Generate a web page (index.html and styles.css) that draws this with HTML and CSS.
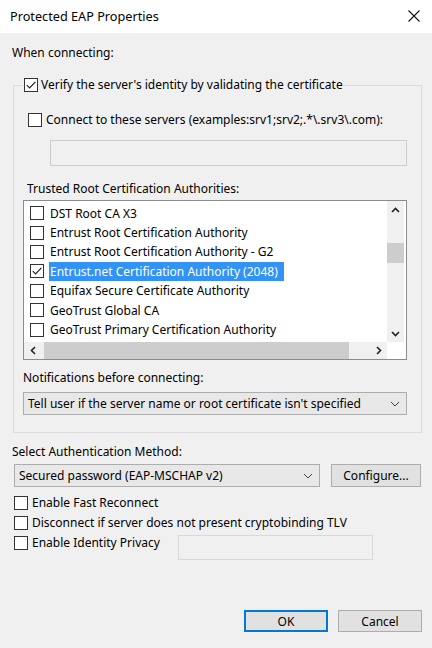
FILE: index.html
```html
<!DOCTYPE html>
<html>
<head>
<meta charset="utf-8">
<link rel="stylesheet" href="styles.css">
</head>
<body>
<div class="window">
  <div class="titlebar">
    <span class="title">Protected EAP Properties</span>
    <svg class="close" width="14" height="14" viewBox="0 0 14 14"><path d="M1.5 1.5L12.5 12.5M12.5 1.5L1.5 12.5" stroke="#111" stroke-width="1.1" fill="none"/></svg>
  </div>
  <div class="content">
    <div class="label when">When connecting:</div>
    <fieldset class="group">
      <legend class="legend">
        <span class="cb"><svg viewBox="0 0 12 12" width="12" height="12"><path d="M1.8 6.2L4.6 9L10.4 2.8" stroke="#222" stroke-width="1.2" fill="none"/></svg></span>
        <span class="cb-text tight">Verify the server's identity by validating the certificate</span>
      </legend>
      <div class="check-row connect"><span class="cb"></span><span class="cb-text">Connect to these servers (examples:srv1;srv2;.*\.srv3\.com):</span></div>
      <div class="textbox servers"></div>
      <div class="label trusted">Trusted Root Certification Authorities:</div>
      <div class="listbox">
        <div class="rows">
          <div class="item"><span class="cb"></span><span class="item-text">DST Root CA X3</span></div>
          <div class="item"><span class="cb"></span><span class="item-text">Entrust Root Certification Authority</span></div>
          <div class="item"><span class="cb"></span><span class="item-text">Entrust Root Certification Authority - G2</span></div>
          <div class="item"><span class="cb"><svg viewBox="0 0 12 12" width="12" height="12"><path d="M1.8 6.2L4.6 9L10.4 2.8" stroke="#222" stroke-width="1.2" fill="none"/></svg></span><span class="item-text selected">Entrust.net Certification Authority (2048)</span></div>
          <div class="item"><span class="cb"></span><span class="item-text">Equifax Secure Certificate Authority</span></div>
          <div class="item"><span class="cb"></span><span class="item-text">GeoTrust Global CA</span></div>
          <div class="item"><span class="cb"></span><span class="item-text">GeoTrust Primary Certification Authority</span></div>
        </div>
        <div class="vscroll">
          <div class="sb-btn"><svg width="9" height="6" viewBox="0 0 9 6"><path d="M1 5L4.5 1.5L8 5" stroke="#222" stroke-width="1.6" fill="none"/></svg></div>
          <div class="vtrack"><div class="vthumb"></div></div>
          <div class="sb-btn"><svg width="9" height="6" viewBox="0 0 9 6"><path d="M1 1L4.5 4.5L8 1" stroke="#222" stroke-width="1.6" fill="none"/></svg></div>
        </div>
        <div class="hscroll">
          <div class="sb-btn"><svg width="6" height="9" viewBox="0 0 6 9"><path d="M5 1L1.5 4.5L5 8" stroke="#222" stroke-width="1.6" fill="none"/></svg></div>
          <div class="htrack"><div class="hthumb"></div></div>
          <div class="sb-btn"><svg width="6" height="9" viewBox="0 0 6 9"><path d="M1 1L4.5 4.5L1 8" stroke="#222" stroke-width="1.6" fill="none"/></svg></div>
        </div>
        <div class="corner"></div>
      </div>
      <div class="label notif">Notifications before connecting:</div>
      <div class="combo notif-combo">
        <span class="combo-text">Tell user if the server name or root certificate isn't specified</span>
        <svg class="chev" width="10" height="6" viewBox="0 0 10 6"><path d="M1 1L5 5L9 1" stroke="#444" stroke-width="1" fill="none"/></svg>
      </div>
    </fieldset>
    <div class="label auth-label">Select Authentication Method:</div>
    <div class="auth-row">
      <div class="combo auth-combo">
        <span class="combo-text">Secured password (EAP-MSCHAP v2)</span>
        <svg class="chev" width="10" height="6" viewBox="0 0 10 6"><path d="M1 1L5 5L9 1" stroke="#444" stroke-width="1" fill="none"/></svg>
      </div>
      <div class="button configure">Configure...</div>
    </div>
    <div class="options">
      <div class="check-row opt"><span class="cb"></span><span class="cb-text">Enable Fast Reconnect</span></div>
      <div class="check-row opt"><span class="cb"></span><span class="cb-text">Disconnect if server does not present cryptobinding TLV</span></div>
      <div class="check-row opt privacy"><span class="cb"></span><span class="cb-text">Enable Identity Privacy</span><div class="textbox identity"></div></div>
    </div>
    <div class="buttons">
      <div class="button ok">OK</div>
      <div class="button cancel">Cancel</div>
    </div>
  </div>
</div>
</body>
</html>
```

FILE: styles.css
```css
* { box-sizing: border-box; }
html, body {
  margin: 0;
  padding: 0;
}
body {
  width: 432px;
  height: 648px;
  background: #f0f0f0;
  font-family: "Noto Sans", "Open Sans", sans-serif;
  font-size: 12px;
  color: #000;
  overflow: hidden;
}
.window {
  width: 432px;
  height: 648px;
  display: flex;
  flex-direction: column;
}
.titlebar {
  height: 33px;
  background: #fff;
  display: flex;
  align-items: center;
  justify-content: space-between;
  padding: 0 11px 2px 10px;
}
.title {
  font-size: 12.7px;
  color: #000;
}
.close {
  display: block;
}
.content {
  flex: 1;
  display: flex;
  flex-direction: column;
}
.label {
  line-height: 16px;
  height: 16px;
  white-space: nowrap;
}
.when {
  margin: 12px 0 0 12px;
}
.group {
  margin: 16px 10px 0 13px;
  border: 1px solid #dcdcdc;
  padding: 0 14px 17px 9px;
  min-width: 0;
}
.legend {
  padding: 0 1px;
  display: flex;
  align-items: center;
  height: 16px;
}
.cb {
  width: 14px;
  height: 14px;
  border: 1px solid #333;
  background: #fff;
  display: flex;
  align-items: center;
  justify-content: center;
  flex: none;
}
.cb svg { display: block; }
.cb-text {
  margin-left: 4px;
  white-space: nowrap;
  line-height: 16px;
}
.cb-text.tight { margin-left: 3px; }
.check-row {
  display: flex;
  align-items: center;
  height: 16px;
}
.connect {
  margin: 19px 0 0 5px;
}
.textbox {
  border: 1px solid #cccccc;
  background: #f0f0f0;
}
.servers {
  margin: 12px 0 0 27px;
  height: 26px;
}
.trusted {
  margin: 15px 0 0 4px;
}
.listbox {
  margin-top: 3px;
  height: 160px;
  border: 1px solid #8c8c8c;
  background: #fff;
  display: grid;
  grid-template-columns: minmax(0, 1fr) 17px;
  grid-template-rows: minmax(0, 1fr) 17px;
  padding-right: 2px;
}
.rows {
  overflow: hidden;
  padding-top: 2.5px;
}
.item {
  height: 19.4px;
  display: flex;
  align-items: stretch;
  padding-left: 6px;
}
.item .cb { align-self: center; }
.item-text {
  margin-left: 5px;
  padding: 0 3px 0 1px;
  display: flex;
  align-items: center;
  white-space: nowrap;
}
.item-text.selected {
  background: #3392f5;
  color: #fff;
  padding-right: 6px;
}
.vscroll {
  background: #f0f0f0;
  display: flex;
  flex-direction: column;
}
.sb-btn {
  width: 17px;
  height: 17px;
  flex: none;
  display: flex;
  align-items: center;
  justify-content: center;
}
.vtrack {
  flex: 1;
}
.vthumb {
  margin-top: 25px;
  height: 20px;
  background: #cdcdcd;
}
.hscroll {
  background: #f0f0f0;
  display: flex;
}
.htrack {
  flex: 1;
  display: flex;
  align-items: stretch;
}
.hthumb {
  margin-left: 3px;
  width: 305px;
  background: #cdcdcd;
}
.corner {
  background: #fff;
}
.notif {
  margin-top: 10px;
}
.combo {
  height: 23px;
  border: 1px solid #adadad;
  background: #e8e8e8;
  display: flex;
  align-items: center;
  justify-content: space-between;
  padding: 0 6px 0 4px;
}
.combo-text { white-space: nowrap; }
.chev { display: block; flex: none; }
.notif-combo {
  margin-top: 6px;
}
.auth-label {
  margin: 11px 0 0 12px;
}
.auth-row {
  margin: 4px 0 0 14px;
  display: flex;
  gap: 11px;
}
.auth-combo {
  width: 306px;
}
.button {
  height: 23px;
  border: 1px solid #adadad;
  background: #e1e1e1;
  display: flex;
  align-items: center;
  justify-content: center;
  white-space: nowrap;
}
.configure {
  width: 90px;
}
.options {
  margin: 6px 0 0 14px;
  display: flex;
  flex-direction: column;
}
.opt {
  height: 20px;
}
.privacy {
  align-items: flex-start;
  height: 29px;
  width: 359px;
}
.privacy .cb { margin-top: 3px; }
.privacy .cb-text { margin-top: 2px; }
.identity {
  margin: 2px 0 0 auto;
  width: 195px;
  height: 25px;
  border-color: #d9d9d9;
}
.buttons {
  margin: 48px 10px 0 0;
  display: flex;
  justify-content: flex-end;
  gap: 10px;
}
.ok, .cancel {
  width: 84px;
  height: 22px;
}
.ok {
  border: 2px solid #0078d7;
}
```
